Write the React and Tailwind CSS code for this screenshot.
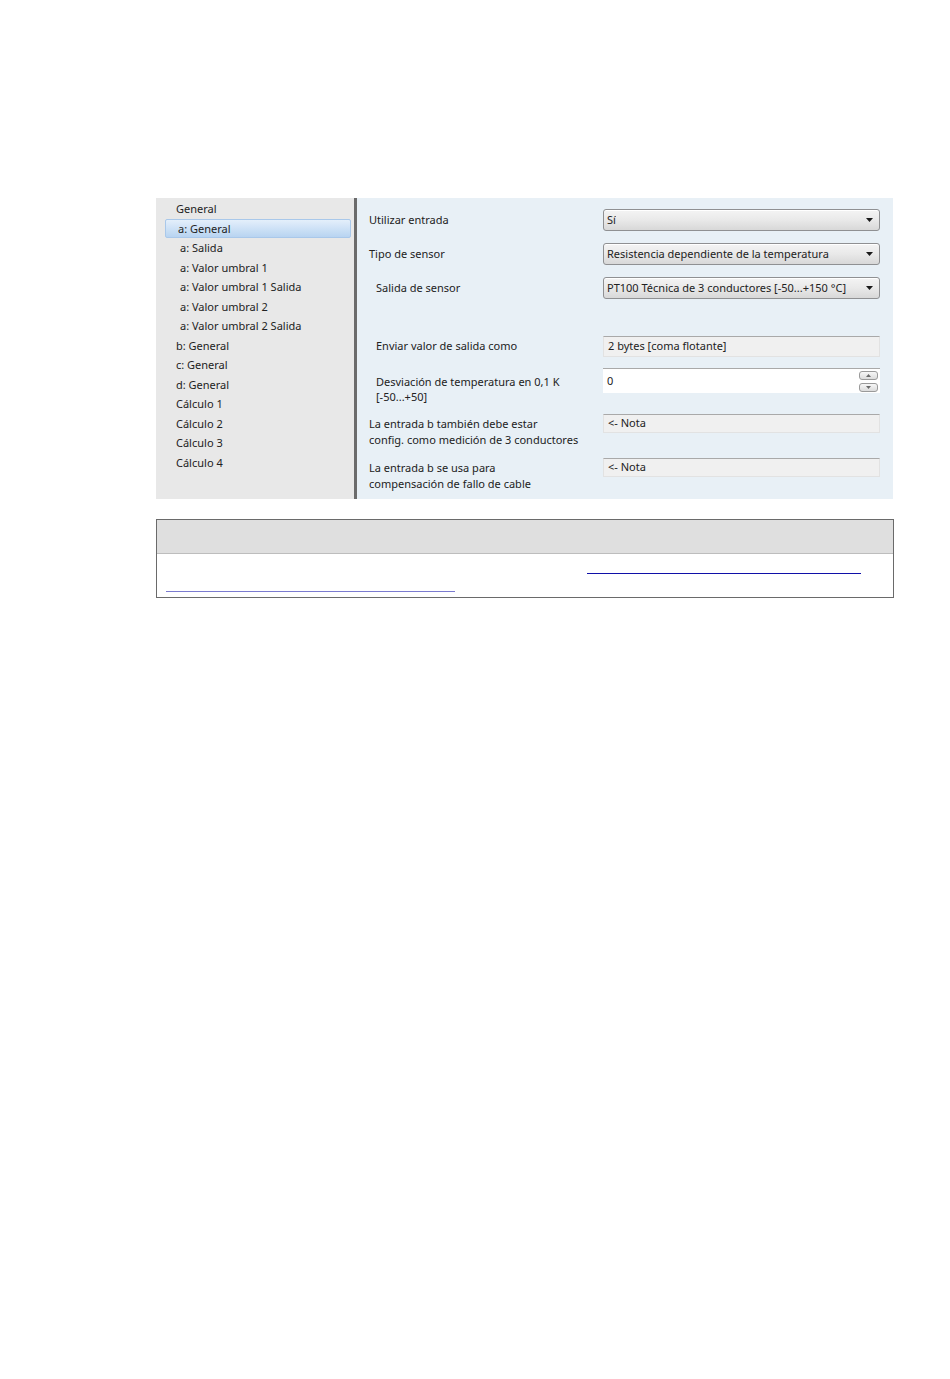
const navItems = [
    { label: 'General', indent: false },
    { label: 'a: General', indent: true, active: true },
    { label: 'a: Salida', indent: true },
    { label: 'a: Valor umbral 1', indent: true },
    { label: 'a: Valor umbral 1 Salida', indent: true },
    { label: 'a: Valor umbral 2', indent: true },
    { label: 'a: Valor umbral 2 Salida', indent: true },
    { label: 'b: General', indent: false },
    { label: 'c: General', indent: false },
    { label: 'd: General', indent: false },
    { label: 'Cálculo 1', indent: false },
    { label: 'Cálculo 2', indent: false },
    { label: 'Cálculo 3', indent: false },
    { label: 'Cálculo 4', indent: false },
];

function Select({ value }) {
    return (
        <div className="w-[277px] h-[22px] rounded-[3px] border border-[#8f9092] bg-gradient-to-b from-[#f4f4f4] via-[#e9e9e9] to-[#d8d8d8] flex items-center justify-between pl-[3px] pr-[6px] shadow-[inset_0_1px_0_#ffffff]">
            <span className="truncate">{value}</span>
            <svg width="7" height="4" viewBox="0 0 7 4" className="shrink-0">
                <path d="M0 0 H7 L3.5 4 Z" fill="#1a1a1a" />
            </svg>
        </div>
    );
}

function ReadOnly({ value, h }) {
    return (
        <div className={`w-[277px] ${h} bg-[#f0f0f0] border border-[#e2e2e2] border-t-[#a9a9a9] flex items-center pl-[4px]`}>
            {value}
        </div>
    );
}

function Spin({ up }) {
    return (
        <div className="w-[19px] h-[9px] rounded-[3px] border border-[#9a9a9a] bg-gradient-to-b from-[#f7f7f7] to-[#dcdcdc] flex items-center justify-center">
            <svg width="5" height="3" viewBox="0 0 5 3">
                <path d={up ? 'M0 3 H5 L2.5 0 Z' : 'M0 0 H5 L2.5 3 Z'} fill="#6a6a6a" />
            </svg>
        </div>
    );
}

export default function App() {
    return (
        <div className="min-h-[1379px] bg-white pt-[198px] pl-[156px] text-[11px] text-[#222222]" style={{ fontFamily: '"Noto Sans", "Open Sans", sans-serif' }}>
            {/* parameter window */}
            <div className="flex w-[737px] h-[301px]">
                <div className="w-[198px] bg-[#e8e8e8] pt-[1px] leading-[19.5px]">
                    {navItems.map((it) => (
                        <div
                            key={it.label}
                            className={
                                it.active
                                    ? 'ml-[9px] mr-[3px] h-[19.5px] pl-[12px] rounded-[2px] border border-[#a9c8ea] bg-gradient-to-b from-[#e4effb] to-[#b8d4f1] leading-[17.5px]'
                                    : it.indent
                                    ? 'pl-[24px]'
                                    : 'pl-[20px]'
                            }
                        >
                            {it.label}
                        </div>
                    ))}
                </div>
                <div className="w-[3px] bg-[#6b6b6b]" />
                <div className="flex-1 bg-[#e8f0f6] pt-[11px] pl-[12px] pr-[13px]">
                    <div className="flex items-center justify-between h-[22px]">
                        <span>Utilizar entrada</span>
                        <Select value="Sí" />
                    </div>
                    <div className="flex items-center justify-between h-[22px] mt-[12px]">
                        <span>Tipo de sensor</span>
                        <Select value="Resistencia dependiente de la temperatura" />
                    </div>
                    <div className="flex items-center justify-between h-[22px] mt-[12px]">
                        <span className="pl-[7px]">Salida de sensor</span>
                        <Select value="PT100 Técnica de 3 conductores [-50...+150 °C]" />
                    </div>
                    <div className="flex items-center justify-between h-[21px] mt-[37px]">
                        <span className="pl-[7px]">Enviar valor de salida como</span>
                        <ReadOnly value="2 bytes [coma flotante]" h="h-[21px]" />
                    </div>
                    <div className="flex items-start justify-between h-[25px] mt-[11px]">
                        <span className="pl-[7px] pt-[6px] leading-[15px]">
                            Desviación de temperatura en 0,1 K
                            <br />
                            [-50...+50]
                        </span>
                        <div className="w-[277px] h-[25px] bg-white border-t border-[#a9a9a9] flex items-center justify-between pl-[4px] pr-[2px]">
                            <span>0</span>
                            <div className="flex flex-col gap-[3px]">
                                <Spin up />
                                <Spin />
                            </div>
                        </div>
                    </div>
                    {[
                        ['La entrada b también debe estar', 'config. como medición de 3 conductores', 'mt-[21px]'],
                        ['La entrada b se usa para', 'compensación de fallo de cable', 'mt-[25px]'],
                    ].map(([a, b, mt]) => (
                        <div key={a} className={`flex items-start justify-between h-[19px] ${mt}`}>
                            <span className="pt-[2px] leading-[16px]">
                                {a}
                                <br />
                                {b}
                            </span>
                            <ReadOnly value="<- Nota" h="h-[19px]" />
                        </div>
                    ))}
                </div>
            </div>

            {/* notes table */}
            <div className="w-[738px] mt-[20px] border border-[#6a6a6a]">
                <div className="h-[34px] bg-[#dfdfdf] border-b border-[#bdbdbd]" />
                <div className="h-[43px] bg-white relative">
                    <span className="absolute left-[430px] top-[19px] w-[274px] h-[1px] bg-[#1010a8]" />
                    <span className="absolute left-[9px] top-[37px] w-[289px] h-[1px] bg-[#7b7bd0]" />
                </div>
            </div>
        </div>
    );
}
